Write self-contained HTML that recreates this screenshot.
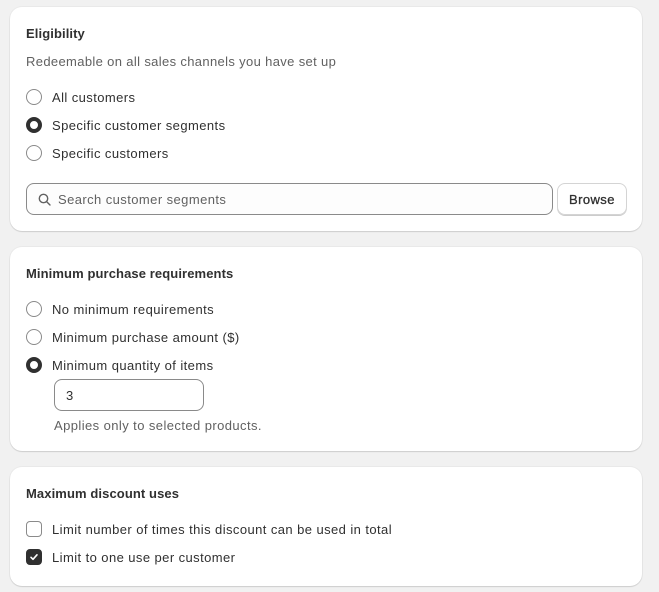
<!DOCTYPE html>
<html><head><style>
body{margin:0;width:659px;height:592px;background:#f1f1f1;font-family:"Liberation Sans",sans-serif;font-size:13px;letter-spacing:0.42px;color:#303030;position:relative;overflow:hidden}
.card{position:absolute;left:10px;width:632px;background:#fff;border-radius:12px;box-shadow:0 1px 1px rgba(0,0,0,.12),0 0 0 1px rgba(0,0,0,.03)}
.t{position:absolute;white-space:nowrap;line-height:16px}
.b{font-weight:bold;letter-spacing:0.1px}
.r{position:absolute;width:16px;height:16px;border:1px solid #8a8a8a;border-radius:50%;box-sizing:border-box;background:#fff}
.r.on{border:4.5px solid #303030}
.c{position:absolute;width:16px;height:16px;border:1px solid #8a8a8a;border-radius:4px;box-sizing:border-box;background:#fff}
</style></head><body>
<div class="card" style="top:7px;height:224px">
<div class="t b" style="left:16px;top:19px">Eligibility</div>
<div class="t" style="left:16px;top:47px;color:#616161;letter-spacing:0.35px">Redeemable on all sales channels you have set up</div>
<div class="r" style="left:16px;top:82px"></div><div class="t" style="left:42px;top:83px">All customers</div>
<div class="r on" style="left:16px;top:110px"></div><div class="t" style="left:42px;top:111px">Specific customer segments</div>
<div class="r" style="left:16px;top:138px"></div><div class="t" style="left:42px;top:139px">Specific customers</div>
<div style="position:absolute;left:16px;top:176px;width:527px;height:32px;border:1px solid #8a8a8a;border-radius:8px;box-sizing:border-box;background:#fdfdfd"></div>
<svg style="position:absolute;left:28px;top:186px" width="13" height="13" viewBox="0 0 13 13"><circle cx="5.5" cy="5.5" r="4.2" fill="none" stroke="#616161" stroke-width="1.4"/><line x1="8.6" y1="8.6" x2="12" y2="12" stroke="#616161" stroke-width="1.4" stroke-linecap="round"/></svg>
<div class="t" style="left:48px;top:185px;color:#616161">Search customer segments</div>
<div style="position:absolute;left:547px;top:176px;width:70px;height:32px;border:1px solid #d4d4d4;border-radius:8px;box-sizing:border-box;box-shadow:0 1px 0 #ccc"></div>
<div class="t" style="left:559px;top:185px;color:#303030;-webkit-text-stroke:0.3px #303030">Browse</div>
</div>
<div class="card" style="top:247px;height:204px">
<div class="t b" style="left:16px;top:19px">Minimum purchase requirements</div>
<div class="r" style="left:16px;top:54px"></div><div class="t" style="left:42px;top:55px">No minimum requirements</div>
<div class="r" style="left:16px;top:82px"></div><div class="t" style="left:42px;top:83px">Minimum purchase amount ($)</div>
<div class="r on" style="left:16px;top:110px"></div><div class="t" style="left:42px;top:111px">Minimum quantity of items</div>
<div style="position:absolute;left:44px;top:132px;width:150px;height:32px;border:1px solid #8a8a8a;border-radius:8px;box-sizing:border-box"></div>
<div class="t" style="left:56px;top:141px">3</div>
<div class="t" style="left:44px;top:171px;color:#616161">Applies only to selected products.</div>
</div>
<div class="card" style="top:467px;height:119px">
<div class="t b" style="left:16px;top:19px">Maximum discount uses</div>
<div class="c" style="left:16px;top:54px"></div><div class="t" style="left:42px;top:55px">Limit number of times this discount can be used in total</div>
<div class="c" style="left:16px;top:82px;background:#303030;border-color:#303030"></div>
<svg style="position:absolute;left:16px;top:82px" width="16" height="16" viewBox="0 0 16 16"><path d="M5 8.3l2 2 4-4.5" fill="none" stroke="#fff" stroke-width="1.6" stroke-linecap="round" stroke-linejoin="round"/></svg>
<div class="t" style="left:42px;top:83px">Limit to one use per customer</div>
</div>
</body></html>
